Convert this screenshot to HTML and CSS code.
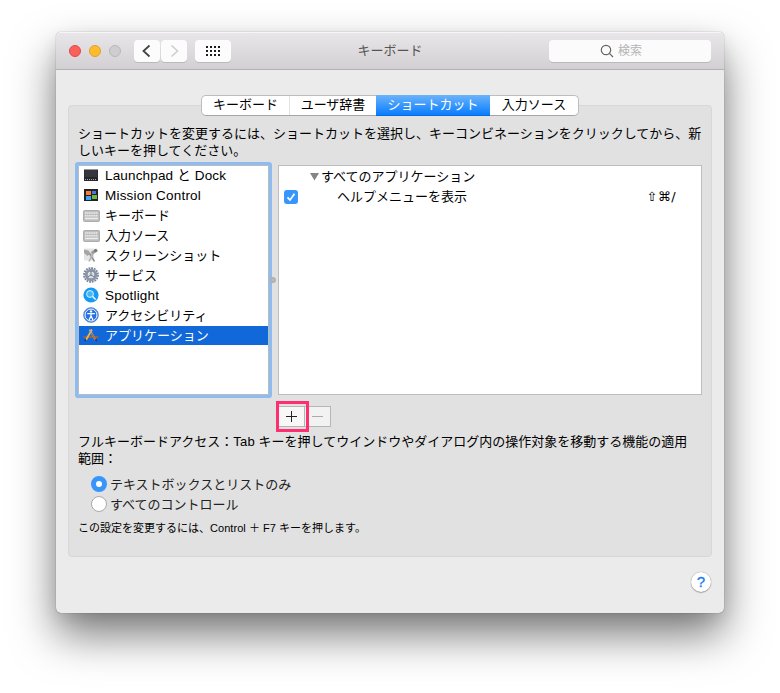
FILE: index.html
```html
<!DOCTYPE html>
<html lang="ja">
<head>
<meta charset="utf-8">
<title>キーボード</title>
<link rel="stylesheet" href="styles.css">
</head>
<body>
<main class="window">
  <header class="titlebar">
    <div class="lights"><i class="light red"></i><i class="light yellow"></i><i class="light gray"></i></div>
    <div class="nav">
      <button class="tool"><svg width="26" height="22" viewBox="0 0 26 22"><path d="M15.5 5.5 9.5 11l6 5.5" fill="none" stroke="#444" stroke-width="1.8"/></svg></button>
      <button class="tool"><svg width="26" height="22" viewBox="0 0 26 22"><path d="M10.5 5.5l6 5.5-6 5.5" fill="none" stroke="#ccc" stroke-width="1.5"/></svg></button>
    </div>
    <button class="tool grid"><svg width="36" height="22" viewBox="0 0 36 22"><path d="M11 7h15M11 11h15M11 15h15" stroke="#1c1c1c" stroke-width="2" stroke-dasharray="2 2"/></svg></button>
    <h1 class="title">キーボード</h1>
    <div class="search"><svg width="14" height="14" viewBox="0 0 14 14"><g fill="none" stroke="#666" stroke-width="1.2"><circle cx="6" cy="6" r="4.7"/><path d="M9.4 9.4l3.6 3.6"/></g></svg><span>検索</span></div>
  </header>

  <nav class="tabs">
    <div class="tab t1">キーボード</div><div class="tab t2">ユーザ辞書</div><div class="tab t3 active">ショートカット</div><div class="tab t4">入力ソース</div>
  </nav>

  <section class="panel">
    <p class="intro">ショートカットを変更するには、ショートカットを選択し、キーコンビネーションをクリックしてから、新<br>しいキーを押してください。</p>
    <div class="lists">
      <ul class="categories">
        <li><svg viewBox="0 0 16 16"><path d="M1 2.500h14v11.500H1z" fill="#25282b"/><path d="M1.500 3h13v7h-13z" fill="#33373c"/><path d="M2 12.500h12" stroke="#aaa" stroke-dasharray="1 1"/></svg><span class="latin">Launchpad と Dock</span></li>
        <li><svg viewBox="0 0 16 16"><path d="M1 2h14v12H1z" fill="#202326"/><path d="M3 4h5v4H3z" fill="#ff7b32"/><path d="M3 9h5v4H3z" fill="#3ca7f0"/><path d="M9 4h4v3H9z" fill="#4b73e8"/><path d="M9 8h5v4H9z" fill="#68bc35"/></svg><span class="mission">Mission Control</span></li>
        <li><svg class="wide" viewBox="0 0 17 16"><rect x=".5" y="3.500" width="16" height="11" rx="1" fill="#bdbdbd" stroke="#999" stroke-width=".7"/><path d="M2 6h13M2 8.700h13" stroke="#ececec" stroke-width="1.6" stroke-dasharray="1.500 .6"/><path d="M2 11.500h13" stroke="#ececec" stroke-width="1.6"/></svg><span>キーボード</span></li>
        <li><svg class="wide" viewBox="0 0 17 16"><rect x=".5" y="3.500" width="16" height="11" rx="1" fill="#bdbdbd" stroke="#999" stroke-width=".7"/><path d="M2 6h13M2 8.700h13" stroke="#ececec" stroke-width="1.6" stroke-dasharray="1.500 .6"/><path d="M2 11.500h13" stroke="#ececec" stroke-width="1.6"/></svg><span>入力ソース</span></li>
        <li><svg viewBox="0 0 16 16"><path d="M1 1.500h10v12H1z" fill="#e4e4e4"/><path d="M1 2.500l4.500 1 2 3-3 2.500L1 6z" fill="#a5a5a5"/><path d="M8 5l5-3.500 2 2.500-6 4z" fill="#999"/><path d="M6.500 6.500l5 8" stroke="#909090" stroke-width="1.500"/><path d="M10 6.500 6 14.500" stroke="#b0b0b0" stroke-width="1.500"/><circle cx="12.500" cy="3.500" r="1.500" fill="#777"/></svg><span>スクリーンショット</span></li>
        <li><svg viewBox="0 0 16 16"><circle cx="8" cy="8" r="7" fill="none" stroke="#78849a" stroke-width="1.800" stroke-dasharray="1.800 .95"/><circle cx="8" cy="8" r="4.700" fill="none" stroke="#8b95a6" stroke-width="3"/><circle cx="8" cy="8" r="2.900" fill="#d5dae2"/><path d="M8 8V4M8 8l3.500 2M8 8l-3.500 2" stroke="#707b90" stroke-width="1"/></svg><span>サービス</span></li>
        <li><svg viewBox="0 0 16 16"><circle cx="8" cy="8" r="7.600" fill="#159bf3"/><circle cx="7" cy="7" r="3.400" fill="#43b6fa" stroke="#d9f1ff"/><path d="M9.600 9.600l3 3" stroke="#fff" stroke-width="1.400"/></svg><span class="spot">Spotlight</span></li>
        <li><svg viewBox="0 0 16 16"><circle cx="8" cy="8" r="7.300" fill="#2671e2" stroke="#4f88d8"/><circle cx="8" cy="8" r="6" fill="none" stroke="#fff"/><circle cx="8" cy="4.400" r="1.200" fill="#fff"/><path d="M4.200 6.700h7.600M8 6v4M8 9l-2 4M8 9l2 4" stroke="#fff" stroke-width="1.300"/></svg><span>アクセシビリティ</span></li>
        <li class="selected"><svg viewBox="0 0 16 16"><path d="M.5 10h15" stroke="#9b643d" stroke-width="1.800"/><path d="M9 2.500 3 13" stroke="#e8b34c" stroke-width="1.800"/><path d="M6.500 2.500 12.500 13" stroke="#b9a9a0" stroke-width="1.800"/><path d="M8.500 6l4 7" stroke="#a8643c" stroke-width="1.300"/><path d="M3 12.500l-1.200 1.500M12.500 12.500l1.200 1.500" stroke="#33302e" stroke-width="1.500"/></svg><span>アプリケーション</span></li>
      </ul>
      <div class="splitter"><i></i></div>
      <div class="shortcuts">
        <div class="group"><svg width="9" height="9" viewBox="0 0 9 9"><path d="M0 1h9L4.500 8.500z" fill="#858585"/></svg><span>すべてのアプリケーション</span></div>
        <div class="shortcut"><i class="check"><svg width="14" height="14" viewBox="0 0 14 14"><path d="M3.500 7.300 6 10l4.500-6.300" fill="none" stroke="#fff" stroke-width="1.700"/></svg></i><span class="name">ヘルプメニューを表示</span><span class="keys">⇧⌘/</span></div>
      </div>
    </div>
    <div class="actions">
      <button class="edit add"><svg width="13" height="13" viewBox="0 0 13 13"><path d="M1 6.500h11M6.500 1v11" stroke="#222" stroke-width="1"/></svg></button><button class="edit"><svg width="13" height="13" viewBox="0 0 13 13"><path d="M1 6.500h11" stroke="#aaa"/></svg></button>
      <i class="highlight"></i>
    </div>
    <p class="access">フルキーボードアクセス：<span class="tabkey">Tab</span> キーを押してウインドウやダイアログ内の操作対象を移動する機能の適用<br>範囲：</p>
    <div class="radios">
      <div class="option"><i class="radio on"></i>テキストボックスとリストのみ</div>
      <div class="option"><i class="radio"></i>すべてのコントロール</div>
    </div>
    <p class="note">この設定を変更するには、<span class="notekeys">Control ＋ F7</span> キーを押します。</p>
  </section>
  <button class="help">?</button>
</main>
</body>
</html>
```

FILE: styles.css
```css
* { box-sizing: border-box; }
body {
  margin: 0;
  padding: 32px 56px 80px;
  background: #fff;
  color: #000;
  font: 13px/17px "Liberation Sans", "Noto Sans CJK JP", sans-serif;
  overflow: hidden;
}
i { font-style: normal; }
p, h1, ul { margin: 0; padding: 0; }
svg { display: block; flex: none; }
button { font: inherit; padding: 0; border: 0; }
span { white-space: pre; }
.window {
  width: 668px;
  height: 581px;
  display: flex;
  flex-direction: column;
  background: #ebebeb;
  border-radius: 5px;
  box-shadow: 0 0 1px rgba(0,0,0,.6), 0 22px 44px rgba(0,0,0,.52), 0 6px 16px rgba(0,0,0,.08);
}
.titlebar {
  height: 38px;
  flex: none;
  display: flex;
  align-items: center;
  padding: 0 13px;
  border-radius: 5px 5px 0 0;
  border-top: 1px solid #f5f5f5;
  border-bottom: 1px solid #b3b1b3;
  background: linear-gradient(#e8e6e8, #d2d0d2);
}
.lights { display: flex; gap: 8px; width: 65px; }
.light { width: 12px; height: 12px; border-radius: 50%; border: 1px solid #e2483f; background: #fc605a; }
.yellow { background: #fdbc2e; border-color: #dea12f; }
.gray { background: #cfcecf; border-color: #b9b8b9; }
.nav { display: flex; gap: 1px; }
.tool { display: grid; place-items: center; width: 26px; height: 22px; border-radius: 4px; background: #fcfcfc; box-shadow: 0 1px 0 #bbb9bb; }
.grid { width: 36px; margin-left: 8px; }
.title { flex: 1; padding-bottom: 1px; text-align: center; font-size: 13px; font-weight: 400; color: #555; }
.search { width: 162px; height: 22px; display: flex; align-items: center; justify-content: center; gap: 4px; padding-right: 18px; border-radius: 4px; background: #fbfbfb; box-shadow: 0 1px 0 #bbb9bb; color: #b5b5b5; font-size: 12px; }
.tabs {
  position: relative;
  z-index: 1;
  align-self: center;
  display: flex;
  width: 378px;
  height: 21px;
  margin: 25px 0 -11px;
  border: 1px solid #bdbdbd;
  border-bottom-color: #a5a5a5;
  border-radius: 5px;
  background: #fff;
}
.tab { line-height: 18px; text-align: center; }
.t1 { width: 88px; border-right: 1px solid #e1e1e1; }
.t2 { width: 86px; }
.t3 { width: 114px; }
.t4 { width: 88px; }
.active { margin: -1px 0; padding-top: 1px; color: #fff; background: linear-gradient(#6cb3fa, #087dff); border-bottom: 1px solid #0768df; }
.panel {
  width: 644px;
  height: 452px;
  flex: none;
  align-self: center;
  padding: 19px 9px 0;
  background: #e1e1e1;
  border: 1px solid #d7d7d7;
  border-radius: 4px;
}
.intro { height: 40px; white-space: nowrap; }
.lists { display: flex; height: 230px; }
.categories {
  width: 191px;
  list-style: none;
  background: #fff;
  border: 1px solid #bbb;
  border-radius: 1px;
  box-shadow: 0 0 0 3px #8dbcf0;
}
.categories li { height: 20px; display: flex; align-items: center; gap: 6px; padding: 0 0 2px 4px; }
.categories li svg { width: 16px; height: 16px; }
.categories li .wide { width: 17px; margin: 0 -1px 0 0; }
.categories .selected { height: 19px; padding-bottom: 1px; background: #1168d9; color: #fff; }
.latin { font-size: 13.5px; letter-spacing: .16px; }
.mission { font-size: 13.5px; letter-spacing: .2px; }
.spot { font-size: 13.5px; letter-spacing: .18px; }
.splitter { width: 9px; display: flex; align-items: center; justify-content: center; padding-right: 1px; }
.splitter i { position: relative; z-index: 1; flex: none; width: 6px; height: 6px; border-radius: 50%; background: #b9b9b9; border: 1px solid #aaa; }
.shortcuts { width: 424px; background: #fff; border: 1px solid #bdbdbd; }
.group { height: 20px; padding-left: 31px; display: flex; align-items: center; gap: 2px; }
.shortcut { height: 21px; display: flex; align-items: center; padding: 0 25px 0 5px; }
.check { width: 14px; height: 14px; border-radius: 3px; background: #3795fb; }
.name { margin-left: 39px; }
.keys { margin-left: auto; font-family: "DejaVu Sans", sans-serif; font-size: 13px; letter-spacing: .4px; }
.actions { position: relative; display: flex; height: 38px; padding: 11px 0 0 200px; }
.edit { width: 27px; height: 21px; display: grid; place-items: center; background: #f8f8f8; border: 1px solid #b5b5b5; }
.edit + .edit { width: 27px; margin-left: -1px; background: #f2f2f2; }
.highlight { position: absolute; left: 198px; top: 6px; width: 33px; height: 31px; border: 3px solid #ff2e70; }
.access { height: 41px; white-space: nowrap; }
.tabkey { letter-spacing: .2px; }
.radios { padding-left: 13px; }
.option { height: 20px; display: flex; align-items: center; gap: 3px; color: #222; }
.radio { width: 16px; height: 16px; border-radius: 50%; background: #fff; border: 1px solid #aaa; }
.on { background: #fff; border: 5px solid #3795fb; }
.note { margin-top: 6px; font-size: 11px; line-height: 17px; }
.notekeys { letter-spacing: .05px; }
.help { align-self: flex-end; width: 20px; height: 20px; margin: 15px 13px 0 0; border-radius: 50%; background: #fff; box-shadow: 0 0 1px #777, 0 1px 1px #aaa; color: #147cf5; font-size: 15px; line-height: 20px; -webkit-text-stroke: .3px #147cf5; }
```
